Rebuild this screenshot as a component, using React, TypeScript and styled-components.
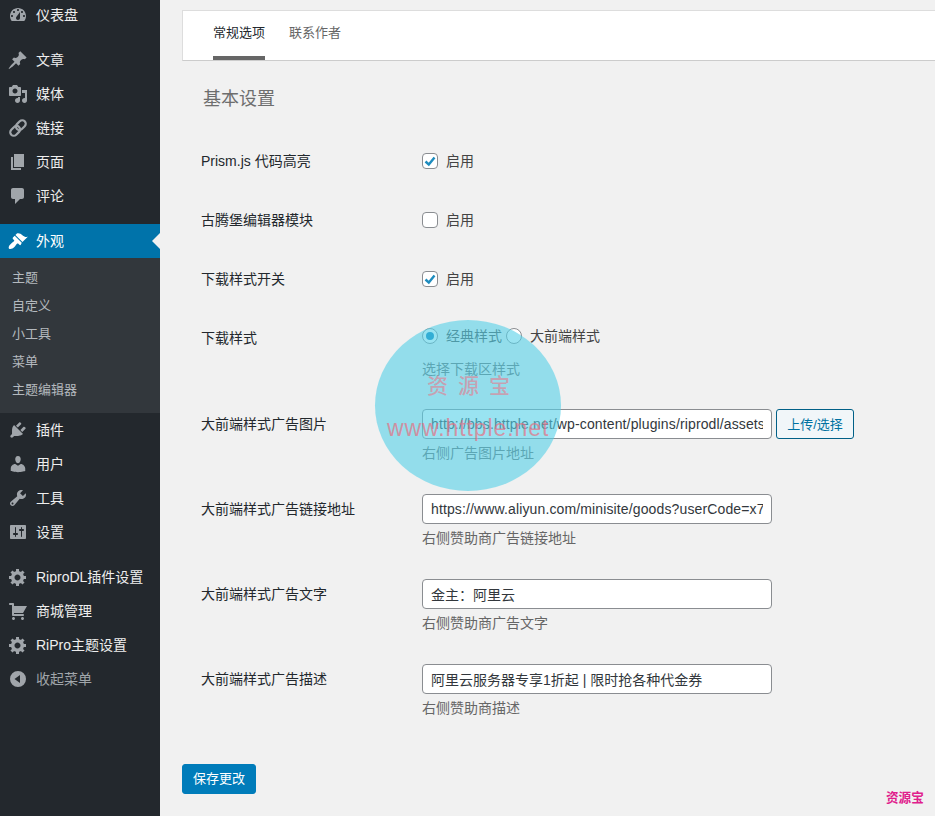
import React from 'react';
import styled, { createGlobalStyle } from 'styled-components';

const GlobalStyle = createGlobalStyle`
    html, body {
        margin: 0;
        height: 100%;
        overflow: hidden;
        background: #f1f1f1;
    }
    body {
        font-family: 'Liberation Sans', 'Noto Sans CJK SC', sans-serif;
        font-size: 14px;
        color: #32373c;
    }
`;

const Page = styled.div`
    display: flex;
    width: 935px;
    height: 816px;
    overflow: hidden;
    position: relative;
`;

const Sidebar = styled.nav`
    width: 160px;
    flex: none;
    height: 100%;
    background: #23282d;
    overflow: hidden;
`;

const Menu = styled.div`
    margin-top: -2px;
    display: flex;
    flex-direction: column;
`;

const MenuItem = styled.div<{ $active?: boolean; $gap?: boolean; $muted?: boolean }>`
    position: relative;
    display: flex;
    align-items: center;
    height: 34px;
    box-sizing: border-box;
    padding: 0 0 2px 36px;
    flex: none;
    margin-top: ${({ $gap }) => ($gap ? '11px' : '0')};
    font-size: 14px;
    color: ${({ $active, $muted }) => ($active ? '#fff' : $muted ? '#a0a5aa' : '#eee')};
    background: ${({ $active }) => ($active ? '#0073aa' : 'transparent')};

    svg {
        position: absolute;
        left: 8px;
        top: 7px;
        width: 20px;
        height: 20px;
        color: ${({ $active }) => ($active ? '#fff' : '#a0a5aa')};
        fill: currentColor;
    }
`;

const ActiveArrow = styled.span`
    position: absolute;
    right: 0;
    top: 9px;
    width: 0;
    height: 0;
    border: 8px solid transparent;
    border-right-color: #f1f1f1;
    border-left-width: 0;
`;

const SubMenu = styled.div`
    background: #32373c;
    padding: 6px 0 9px;
    display: flex;
    flex-direction: column;
`;

const SubItem = styled.div`
    height: 28px;
    line-height: 28px;
    padding-left: 12px;
    font-size: 13px;
    color: #b4b9be;
`;

const Main = styled.main`
    flex: 1;
    min-width: 0;
    padding-left: 22px;
    overflow: hidden;
`;

const Tabs = styled.div`
    display: flex;
    gap: 24px;
    height: 51px;
    box-sizing: border-box;
    margin: 10px -3px 0 0;
    padding-left: 30px;
    background: #fff;
    border: 1px solid #ddd;
    border-bottom-color: #ccc;
`;

const Tab = styled.div<{ $active?: boolean }>`
    height: 49px;
    box-sizing: border-box;
    padding-top: 13px;
    font-size: 13px;
    line-height: 18px;
    color: ${({ $active }) => ($active ? '#23282d' : '#666')};
    border-bottom: 4px solid ${({ $active }) => ($active ? '#666' : 'transparent')};
`;

const Heading = styled.h2`
    margin: 27px 0 20px 21px;
    height: 23px;
    font-size: 18px;
    line-height: 23px;
    font-weight: 400;
    color: #6e6e6e;
`;

const Form = styled.div`
    display: flex;
    flex-direction: column;
    padding-left: 19px;
`;

const Row = styled.div<{ $height: number }>`
    display: grid;
    grid-template-columns: 221px 1fr;
    height: ${({ $height }) => $height}px;
    box-sizing: border-box;
    padding-top: 15px;
`;

const Label = styled.div`
    font-size: 14px;
    line-height: 30px;
    height: 30px;
    color: #23282d;
`;

const Field = styled.div`
    display: flex;
    flex-direction: column;
`;

const Inline = styled.div<{ $short?: boolean }>`
    display: flex;
    align-items: center;
    height: ${({ $short }) => ($short ? '26px' : '30px')};
    color: #444;
`;

const InlineText = styled.span`
    position: relative;
    top: -1px;
    margin-right: 4px;
`;

const CheckBox = styled.span`
    width: 16px;
    height: 16px;
    box-sizing: border-box;
    flex: none;
    margin-right: 8px;
    background: #fff;
    border: 1px solid #8a8d91;
    border-radius: 4px;
    display: flex;
    align-items: center;
    justify-content: center;

    svg {
        width: 12px;
        height: 12px;
    }
`;

const Radio = styled.span<{ $checked?: boolean }>`
    width: 16px;
    height: 16px;
    box-sizing: border-box;
    flex: none;
    margin-right: 8px;
    border: 1px solid #8a8d91;
    border-radius: 50%;
    background: #fff;
    display: flex;
    align-items: center;
    justify-content: center;

    &::before {
        content: '';
        display: ${({ $checked }) => ($checked ? 'block' : 'none')};
        width: 8px;
        height: 8px;
        border-radius: 50%;
        background: #007cba;
    }
`;

const Hint = styled.div<{ $offset: number }>`
    margin-top: ${({ $offset }) => $offset}px;
    font-size: 14px;
    line-height: 16px;
    color: #666;
`;

const InputRow = styled.div`
    display: flex;
    gap: 4px;
`;

const TextInput = styled.input<{ $url?: boolean }>`
    width: 350px;
    height: 30px;
    box-sizing: border-box;
    padding: 0 8px;
    font: 14px 'Liberation Sans', 'Noto Sans CJK SC', sans-serif;
    letter-spacing: ${({ $url }) => ($url ? '0.13px' : '0')};
    color: #32373c;
    background: #fff;
    border: 1px solid #8a8d91;
    border-radius: 4px;
    outline: none;
`;

const UploadButton = styled.button`
    width: 78px;
    height: 30px;
    padding: 0 0 2px;
    font: 13px 'Liberation Sans', 'Noto Sans CJK SC', sans-serif;
    color: #0071a1;
    background: #f1f6f9;
    border: 1px solid #016087;
    border-radius: 3px;
`;

const SaveButton = styled.button`
    display: block;
    margin-top: 30px;
    width: 74px;
    height: 30px;
    padding: 0 0 3px;
    font: 13px 'Liberation Sans', 'Noto Sans CJK SC', sans-serif;
    color: #fff;
    background: #007cba;
    border: 1px solid #007cba;
    border-radius: 3px;
`;

const Circle = styled.div`
    position: absolute;
    left: 375px;
    top: 320px;
    width: 186px;
    height: 171px;
    border-radius: 50%;
    background: rgba(85, 208, 232, 0.6);
`;

const MarkTitle = styled.div`
    position: absolute;
    left: 427px;
    top: 377px;
    font-size: 21px;
    line-height: 18px;
    letter-spacing: 10px;
    font-weight: 500;
    color: rgba(232, 120, 140, 0.6);
    white-space: nowrap;
`;

const MarkUrl = styled.div`
    position: absolute;
    left: 387px;
    top: 415px;
    font-size: 23px;
    line-height: 26px;
    letter-spacing: 0.9px;
    color: rgba(232, 110, 130, 0.7);
    white-space: nowrap;
`;

const Corner = styled.div`
    position: absolute;
    left: 886px;
    top: 790px;
    font-size: 12.6px;
    line-height: 16px;
    font-weight: 700;
    color: #e0208c;
`;

const Icon = ({ d }: { d: string }) => (
    <svg viewBox="0 0 20 20">
        <path fillRule="evenodd" d={d} />
    </svg>
);

const LinkIcon = () => (
    <svg viewBox="0 0 20 20">
        <g transform="rotate(-45 10 10)" fill="none" stroke="currentColor" strokeWidth="2.2">
            <rect x="0.5" y="6.5" width="11" height="7" rx="3.5" />
            <rect x="8.500" y="6.5" width="11" height="7" rx="3.5" />
        </g>
    </svg>
);

const Check = () => (
    <svg viewBox="0 0 12 12">
        <path d="M1.500 6.500 L4.800 9.500 L10.500 2.500" fill="none" stroke="#1e8cbe" strokeWidth="2.400" />
    </svg>
);

const icons = {
    dashboard: 'M3.760 16h12.480c1.100-1.370 1.760-3.110 1.760-5 0-4.420-3.580-8-8-8s-8 3.580-8 8c0 1.890.66 3.630 1.760 5zM10 4c.55 0 1 .45 1 1s-.45 1-1 1-1-.45-1-1 .45-1 1-1zM6 6c.55 0 1 .45 1 1s-.45 1-1 1-1-.45-1-1 .45-1 1-1zm8 0c.55 0 1 .45 1 1s-.45 1-1 1-1-.45-1-1 .45-1 1-1zm-5.370 5.550L12 7v6c0 1.100-.9 2-2 2s-2-.9-2-2c0-.57.24-1.080.63-1.450zM4 10c.55 0 1 .45 1 1s-.45 1-1 1-1-.45-1-1 .45-1 1-1zm12 0c.55 0 1 .45 1 1s-.45 1-1 1-1-.45-1-1 .45-1 1-1z',
    post: 'M10.440 3.020l1.820-1.820 6.360 6.350-1.830 1.820c-1.050-.68-2.480-.57-3.400.36l-.75.75c-.92.93-1.040 2.350-.35 3.400l-1.830 1.820-2.410-2.410-2.800 2.800c-.48.480-3.930 3.340-4.410 2.860s2.390-3.920 2.870-4.400l2.800-2.800-2.410-2.410 1.820-1.830c1.050.69 2.480.570 3.400-.35l.75-.75c.93-.92 1.040-2.350.36-3.400z',
    media: 'M13 11V4c0-.55-.45-1-1-1h-1.670L9 1H5L3.670 3H2c-.55 0-1 .45-1 1v7c0 .55.45 1 1 1h10c.55 0 1-.45 1-1zM7 4.500c1.380 0 2.500 1.120 2.500 2.500S8.380 9.500 7 9.500 4.500 8.380 4.500 7 5.620 4.500 7 4.500zM14 6h5v10.500c0 1.380-1.120 2.500-2.500 2.500S14 17.880 14 16.500s1.120-2.500 2.500-2.500c.17 0 .34.020.5.050V9h-3V6zm-4 8.050V13h2v3.500c0 1.380-1.120 2.500-2.500 2.500S7 17.880 7 16.500 8.120 14 9.500 14c.17 0 .34.020.5.050z',
    page: 'M6 15V2h10v13H6zm-1 1h8v2H3V5h2v11z',
    comment: 'M5 2h9c1.100 0 2 .9 2 2v7c0 1.100-.9 2-2 2h-2l-5 5v-5H5c-1.100 0-2-.9-2-2V4c0-1.100.9-2 2-2z',
    brush: 'M14.480 11.060L7.410 3.990l1.500-1.500c.5-.56 2.300-.47 3.510.32 1.210.8 1.430 1.280 2.910 2.100 1.180.64 2.450 1.260 4.450.85zm-.71.71L6.700 4.700 4.930 6.470c-.39.39-.39 1.020 0 1.410l1.060 1.060c.39.39.39 1.030 0 1.420-.6.6-1.430 1.110-2.210 1.690-.35.26-.7.53-1.010.84C1.430 13.730 0 16.520 1.140 17.660c1.140 1.140 3.930-.29 5.270-1.640.31-.31.58-.66.84-1.010.58-.78 1.090-1.610 1.690-2.210.39-.39 1.030-.39 1.420 0l1.060 1.060c.39.39 1.020.39 1.410 0z',
    plugin: 'M13.110 4.360L9.870 7.600 8 5.730l3.240-3.240c.35-.34 1.050-.2 1.560.32.52.51.66 1.210.31 1.550zm-8 1.770l.91-1.120 9.010 9.010-1.190.84c-.71.71-2.630 1.160-3.820 1.160H6.140L4.900 17.260c-.59.59-1.540.59-2.120 0-.59-.58-.59-1.530 0-2.120l1.240-1.240v-3.880c0-1.130.4-3.070 1.090-3.890zm7.260 3.970l3.240-3.240c.34-.35 1.040-.21 1.550.31.52.51.66 1.210.31 1.550l-3.240 3.250z',
    user: 'M10 9.250c-2.270 0-2.730-3.440-2.730-3.440C7 4.020 7.820 2 9.970 2c2.160 0 2.980 2.020 2.710 3.810 0 0-.41 3.440-2.680 3.440zm0 2.570L12.720 10c2.390 0 4.520 2.330 4.520 4.530v2.490s-3.650 1.130-7.240 1.130c-3.650 0-7.240-1.130-7.240-1.130v-2.490c0-2.250 1.940-4.480 4.470-4.480z',
    tools: 'M16.680 9.770c-1.340 1.340-3.300 1.670-4.950.99l-5.410 6.520c-.99.99-2.590.99-3.580 0s-.99-2.590 0-3.570l6.520-5.420c-.68-1.650-.35-3.610.99-4.950 1.280-1.280 3.120-1.620 4.720-1.060l-2.890 2.890 2.820 2.820 2.860-2.860c.56 1.600.22 3.440-1.080 4.640zM3.810 16.210c.4.390 1.030.39 1.420 0 .4-.4.400-1.030 0-1.420-.39-.4-1.020-.4-1.420 0-.39.39-.39 1.020 0 1.420z',
    settings: 'M18 16V4c0-.55-.45-1-1-1H3c-.55 0-1 .45-1 1v12c0 .55.45 1 1 1h14c.55 0 1-.45 1-1zM8 11h1c.55 0 1 .45 1 1s-.45 1-1 1H8v1.500c0 .28-.22.5-.5.5s-.5-.22-.5-.5V13H6c-.55 0-1-.45-1-1s.45-1 1-1h1V5.500c0-.28.22-.5.5-.5s.5.220.5.5V11zm5-2h-1c-.55 0-1-.45-1-1s.45-1 1-1h1V5.500c0-.28.22-.5.5-.5s.5.220.5.5V7h1c.55 0 1 .45 1 1s-.45 1-1 1h-1v5.500c0 .28-.22.5-.5.5s-.5-.22-.5-.5V9z',
    gear: 'M18 12h-2.180c-.17.7-.44 1.350-.81 1.930l1.540 1.540-2.100 2.100-1.540-1.540c-.58.360-1.230.640-1.910.810V19H8v-2.180c-.680-.170-1.330-.440-1.910-.810l-1.540 1.540-2.120-2.120 1.540-1.540c-.360-.580-.640-1.220-.810-1.890H1V9h2.180c.170-.700.440-1.340.810-1.920L2.460 5.540l2.100-2.100 1.540 1.540c.580-.370 1.230-.640 1.920-.810V2h3v2.180c.680.170 1.330.440 1.910.810l1.540-1.540 2.120 2.120-1.540 1.540c.360.580.640 1.220.810 1.890H18v3zm-8.500 1.500c1.660 0 3-1.340 3-3s-1.340-3-3-3-3 1.340-3 3 1.340 3 3 3z',
    cart: 'M6 13h9c.55 0 1 .45 1 1s-.45 1-1 1H5c-.55 0-1-.45-1-1V4H2c-.55 0-1-.45-1-1s.45-1 1-1h3c.55 0 1 .45 1 1v2h13l-4 7H6v1zm-.5 3c.83 0 1.500.670 1.500 1.500S6.330 19 5.500 19 4 18.330 4 17.500 4.670 16 5.500 16zm9 0c.83 0 1.500.670 1.500 1.500s-.670 1.500-1.500 1.500-1.500-.670-1.500-1.500.670-1.500 1.500-1.500z',
    collapse: 'M10 2a8 8 0 1 1 0 16 8 8 0 0 1 0-16zm2 4L6.500 10l5.500 4V6z',
};

const topItems = [
    { text: '文章', icon: <Icon d={icons.post} />, gap: true },
    { text: '媒体', icon: <Icon d={icons.media} /> },
    { text: '链接', icon: <LinkIcon /> },
    { text: '页面', icon: <Icon d={icons.page} /> },
    { text: '评论', icon: <Icon d={icons.comment} /> },
];

const subItems = ['主题', '自定义', '小工具', '菜单', '主题编辑器'];

const lowerItems = [
    { text: '插件', icon: <Icon d={icons.plugin} /> },
    { text: '用户', icon: <Icon d={icons.user} /> },
    { text: '工具', icon: <Icon d={icons.tools} /> },
    { text: '设置', icon: <Icon d={icons.settings} /> },
    { text: 'RiproDL插件设置', icon: <Icon d={icons.gear} />, gap: true },
    { text: '商城管理', icon: <Icon d={icons.cart} /> },
    { text: 'RiPro主题设置', icon: <Icon d={icons.gear} /> },
];

const checks = [
    { label: 'Prism.js 代码高亮', checked: true },
    { label: '古腾堡编辑器模块', checked: false },
    { label: '下载样式开关', checked: true },
];

const textRows = [
    { label: '大前端样式广告图片', value: 'http://bbs.httple.net/wp-content/plugins/riprodl/assets/images/ad.jpg', hint: '右侧广告图片地址', upload: true, url: true },
    { label: '大前端样式广告链接地址', value: 'https://www.aliyun.com/minisite/goods?userCode=x7', hint: '右侧赞助商广告链接地址', url: true },
    { label: '大前端样式广告文字', value: '金主：阿里云', hint: '右侧赞助商广告文字' },
    { label: '大前端样式广告描述', value: '阿里云服务器专享1折起 | 限时抢各种代金券', hint: '右侧赞助商描述' },
];

const App = () => (
    <Page>
        <GlobalStyle />
        <Sidebar>
            <Menu>
                <MenuItem><Icon d={icons.dashboard} />仪表盘</MenuItem>
                {topItems.map((item) => (
                    <MenuItem key={item.text} $gap={item.gap}>{item.icon}{item.text}</MenuItem>
                ))}
                <MenuItem $active $gap><Icon d={icons.brush} />外观<ActiveArrow /></MenuItem>
                <SubMenu>
                    {subItems.map((text) => <SubItem key={text}>{text}</SubItem>)}
                </SubMenu>
                {lowerItems.map((item) => (
                    <MenuItem key={item.text} $gap={item.gap}>{item.icon}{item.text}</MenuItem>
                ))}
                <MenuItem $muted><Icon d={icons.collapse} />收起菜单</MenuItem>
            </Menu>
        </Sidebar>
        <Main>
            <Tabs>
                <Tab $active>常规选项</Tab>
                <Tab>联系作者</Tab>
            </Tabs>
            <Heading>基本设置</Heading>
            <Form>
                {checks.map((row) => (
                    <Row key={row.label} $height={59}>
                        <Label>{row.label}</Label>
                        <Inline>
                            <CheckBox>{row.checked && <Check />}</CheckBox>
                            <InlineText>启用</InlineText>
                        </Inline>
                    </Row>
                ))}
                <Row $height={86}>
                    <Label>下载样式</Label>
                    <Field>
                        <Inline $short>
                            <Radio $checked />
                            <InlineText>经典样式</InlineText>
                            <Radio />
                            <InlineText>大前端样式</InlineText>
                        </Inline>
                        <Hint $offset={12}>选择下载区样式</Hint>
                    </Field>
                </Row>
                {textRows.map((row) => (
                    <Row key={row.label} $height={85}>
                        <Label>{row.label}</Label>
                        <Field>
                            <InputRow>
                                <TextInput readOnly value={row.value} $url={row.url} />
                                {row.upload && <UploadButton>上传/选择</UploadButton>}
                            </InputRow>
                            <Hint $offset={6}>{row.hint}</Hint>
                        </Field>
                    </Row>
                ))}
            </Form>
            <SaveButton>保存更改</SaveButton>
        </Main>
        <Circle />
        <MarkTitle>资源宝</MarkTitle>
        <MarkUrl>www.httple.net</MarkUrl>
        <Corner>资源宝</Corner>
    </Page>
);

export default App;
